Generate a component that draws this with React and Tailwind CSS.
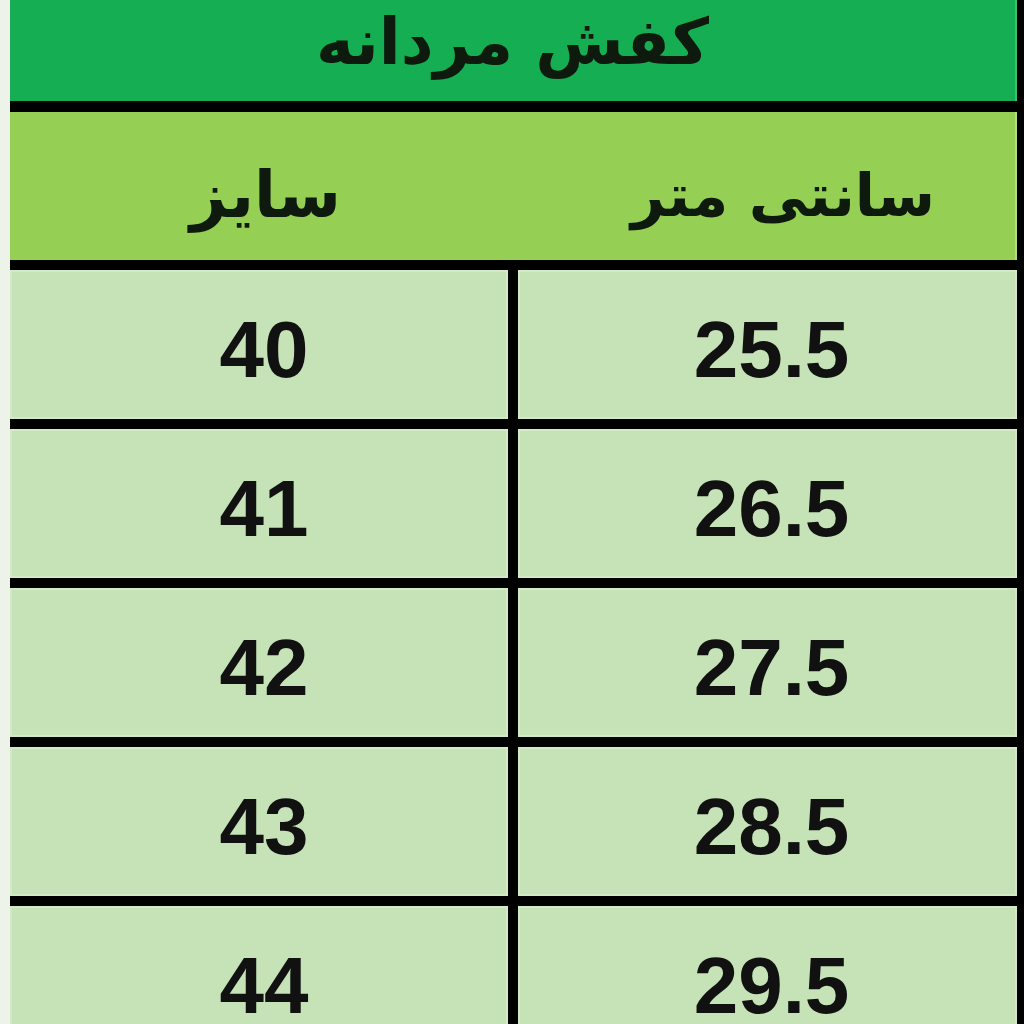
import React from "react";

const rows = [
  ["40", "25.5"],
  ["41", "26.5"],
  ["42", "27.5"],
  ["43", "28.5"],
  ["44", "29.5"],
];

const fa = { fontFamily: '"DejaVu Sans", "Noto Sans", sans-serif' };
const num = { fontFamily: '"Liberation Sans", Arial, sans-serif' };

export default function App() {
  return (
    <div className="w-[1024px] h-[1024px] overflow-hidden flex bg-[#eef3ea]">
      <div className="w-[10px] shrink-0 bg-[#eef3ea]" />
      <div className="w-[1014px] shrink-0 bg-black pr-[7px] flex flex-col">
        <div className="h-[101px] shrink-0 bg-[#16ae52] flex items-start justify-center border-r-2 border-[#3cc06c]">
          <span dir="rtl" style={fa} className="text-[64px] font-bold text-[#0d1a0d] leading-none mt-[10px]">
            کفش مردانه
          </span>
        </div>
        <div className="mt-[11px] h-[148px] shrink-0 bg-[#95cf54] flex border-r-2 border-[#b3dd85]">
          <div className="w-[498px] flex items-center justify-center pl-[14px] pt-[18px]">
            <span dir="rtl" style={fa} className="text-[64px] font-bold text-[#0d1a0d] leading-none">
              سایز
            </span>
          </div>
          <div className="w-[509px] flex items-center justify-center pl-[44px] pt-[18px]">
            <span dir="rtl" style={fa} className="text-[59px] font-bold text-[#0d1a0d] leading-none">
              سانتی متر
            </span>
          </div>
        </div>
        {rows.map(([s, c]) => (
          <div key={s} className="mt-[10px] h-[149px] shrink-0 flex gap-[10px]">
            <div className="w-[498px] bg-[#c6e3b7] border-2 border-[#d3eac6] flex items-center justify-center">
              <span style={num} className="text-[80px] font-bold text-[#111] leading-none pt-[10px] pl-[10px]">
                {s}
              </span>
            </div>
            <div className="w-[499px] bg-[#c6e3b7] border-2 border-[#d3eac6] flex items-center justify-center">
              <span style={num} className="text-[80px] font-bold text-[#111] leading-none pt-[10px] pl-[8px]">
                {c}
              </span>
            </div>
          </div>
        ))}
      </div>
    </div>
  );
}
